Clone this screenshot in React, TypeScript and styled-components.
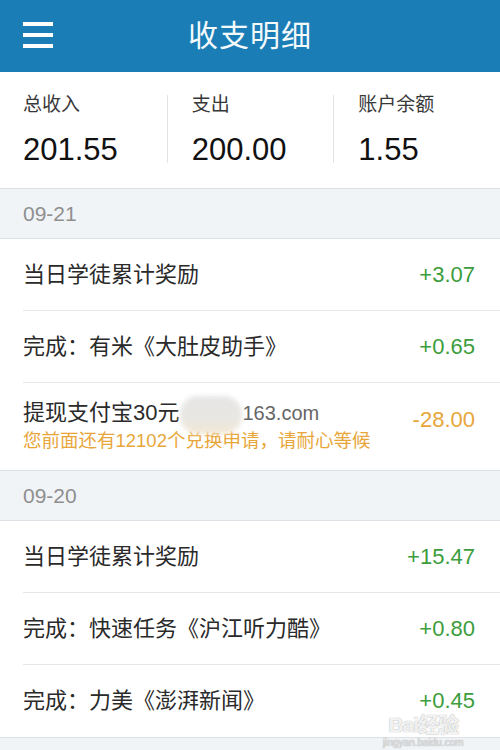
import React from "react";
import styled, { createGlobalStyle } from "styled-components";

const FONT = `"Liberation Sans", "Noto Sans CJK SC", sans-serif`;

const Global = createGlobalStyle`
  html, body {
    margin: 0;
    padding: 0;
    background: #f1f4f7;
    font-family: ${FONT};
  }
  * { box-sizing: border-box; }
`;

const Page = styled.div`
  width: 500px;
  min-height: 750px;
  background: #f1f4f7;
  position: relative;
  overflow: hidden;
`;

const Header = styled.header`
  height: 72px;
  background: #1a7db6;
  display: grid;
  grid-template-columns: 80px 1fr 80px;
  align-items: center;
`;

const MenuButton = styled.div`
  padding-left: 23px;
  display: flex;
  flex-direction: column;
  gap: 7px;
  margin-top: -2px;
`;

const MenuLine = styled.span`
  display: block;
  width: 30px;
  height: 4px;
  background: #ffffff;
`;

const Title = styled.h1`
  margin: 0;
  text-align: center;
  color: #f4f9fc;
  font-size: 30px;
  font-weight: 400;
  letter-spacing: 1px;
  line-height: 36px;
`;

const Summary = styled.section`
  background: #ffffff;
  display: grid;
  grid-template-columns: repeat(3, 1fr);
  padding: 23px 0 25px;
  border-bottom: 1px solid #dcdfe3;
`;

const Stat = styled.div<{ $divider?: boolean }>`
  padding-left: ${(p) => (p.$divider ? "24px" : "23px")};
  border-left: ${(p) => (p.$divider ? "1px solid #e3e3e3" : "none")};
  display: flex;
  flex-direction: column;
  gap: 22px;
`;

const StatLabel = styled.div`
  font-size: 19px;
  line-height: 20px;
  color: #383838;
`;

const StatValue = styled.div`
  font-size: 31px;
  line-height: 26px;
  color: #111111;
`;

const DateHeader = styled.div`
  height: 50px;
  padding-left: 23px;
  display: flex;
  align-items: center;
  background: #f1f4f7;
  color: #8f8f8f;
  font-size: 21px;
  border-bottom: 1px solid #dde0e4;
`;

const Group = styled.div`
  background: #ffffff;
  padding-left: 23px;
  border-bottom: 1px solid #dde0e4;
`;

const Row = styled.div<{ $tall?: boolean }>`
  height: ${(p) => (p.$tall ? "87px" : "72px")};
  padding-right: 25px;
  display: flex;
  align-items: center;
  justify-content: space-between;
  border-bottom: 1px solid #e6e6e6;
  &:last-child {
    border-bottom: none;
  }
`;

const TextBlock = styled.div`
  position: relative;
  display: flex;
  flex-direction: column;
  gap: 3px;
`;

const RowTitle = styled.div`
  font-size: 22px;
  line-height: 26px;
  color: #2a2a2a;
  white-space: nowrap;
`;

const Email = styled.span`
  margin-left: 63px;
  font-size: 20px;
  color: #666666;
`;

const Blur = styled.span`
  position: absolute;
  left: 157px;
  top: -4px;
  width: 62px;
  height: 38px;
  border-radius: 18px;
  background: linear-gradient(180deg, #e4e4e4 0%, #e8e6e2 60%, #f2e6d2 100%);
  filter: blur(2.5px);
  opacity: 0.95;
`;

const SubText = styled.div`
  font-size: 18.5px;
  line-height: 24px;
  color: #e8a63a;
  white-space: nowrap;
`;

const Amount = styled.div<{ $tone: "in" | "out"; $raised?: boolean }>`
  font-size: 22px;
  color: ${(p) => (p.$tone === "in" ? "#3c9d3c" : "#e8a63a")};
  margin-bottom: ${(p) => (p.$raised ? "14px" : "0")};
`;

const Watermark = styled.div`
  position: absolute;
  left: 383px;
  top: 713px;
  display: flex;
  flex-direction: column;
  align-items: center;
  color: rgba(255, 255, 255, 0.85);
  text-shadow: 0 0 1px rgba(150, 150, 150, 0.6), 0 0 1px rgba(150, 150, 150, 0.6);
  pointer-events: none;
`;

const WatermarkMain = styled.div`
  font-size: 21px;
  font-weight: 700;
  letter-spacing: -1px;
  line-height: 24px;
`;

const WatermarkSub = styled.div`
  font-size: 10px;
  line-height: 12px;
  color: rgba(230, 230, 230, 0.9);
`;

type Item = { title: string; amount: string; tone: "in" | "out" };

const day1: Item[] = [
  { title: "当日学徒累计奖励", amount: "+3.07", tone: "in" },
  { title: "完成：有米《大肚皮助手》", amount: "+0.65", tone: "in" },
];

const day2: Item[] = [
  { title: "当日学徒累计奖励", amount: "+15.47", tone: "in" },
  { title: "完成：快速任务《沪江听力酷》", amount: "+0.80", tone: "in" },
  { title: "完成：力美《澎湃新闻》", amount: "+0.45", tone: "in" },
];

export default function App() {
  return (
    <Page>
      <Global />
      <Header>
        <MenuButton>
          <MenuLine />
          <MenuLine />
          <MenuLine />
        </MenuButton>
        <Title>收支明细</Title>
        <div />
      </Header>

      <Summary>
        <Stat>
          <StatLabel>总收入</StatLabel>
          <StatValue>201.55</StatValue>
        </Stat>
        <Stat $divider>
          <StatLabel>支出</StatLabel>
          <StatValue>200.00</StatValue>
        </Stat>
        <Stat $divider>
          <StatLabel>账户余额</StatLabel>
          <StatValue>1.55</StatValue>
        </Stat>
      </Summary>

      <DateHeader>09-21</DateHeader>
      <Group>
        {day1.map((it) => (
          <Row key={it.title}>
            <RowTitle>{it.title}</RowTitle>
            <Amount $tone={it.tone}>{it.amount}</Amount>
          </Row>
        ))}
        <Row $tall>
          <TextBlock>
            <RowTitle>
              提现支付宝30元<Email>163.com</Email>
            </RowTitle>
            <SubText>您前面还有12102个兑换申请，请耐心等候</SubText>
            <Blur />
          </TextBlock>
          <Amount $tone="out" $raised>
            -28.00
          </Amount>
        </Row>
      </Group>

      <DateHeader>09-20</DateHeader>
      <Group>
        {day2.map((it) => (
          <Row key={it.title}>
            <RowTitle>{it.title}</RowTitle>
            <Amount $tone={it.tone}>{it.amount}</Amount>
          </Row>
        ))}
      </Group>

      <Watermark>
        <WatermarkMain>Bai经验</WatermarkMain>
        <WatermarkSub>jingyan.baidu.com</WatermarkSub>
      </Watermark>
    </Page>
  );
}
